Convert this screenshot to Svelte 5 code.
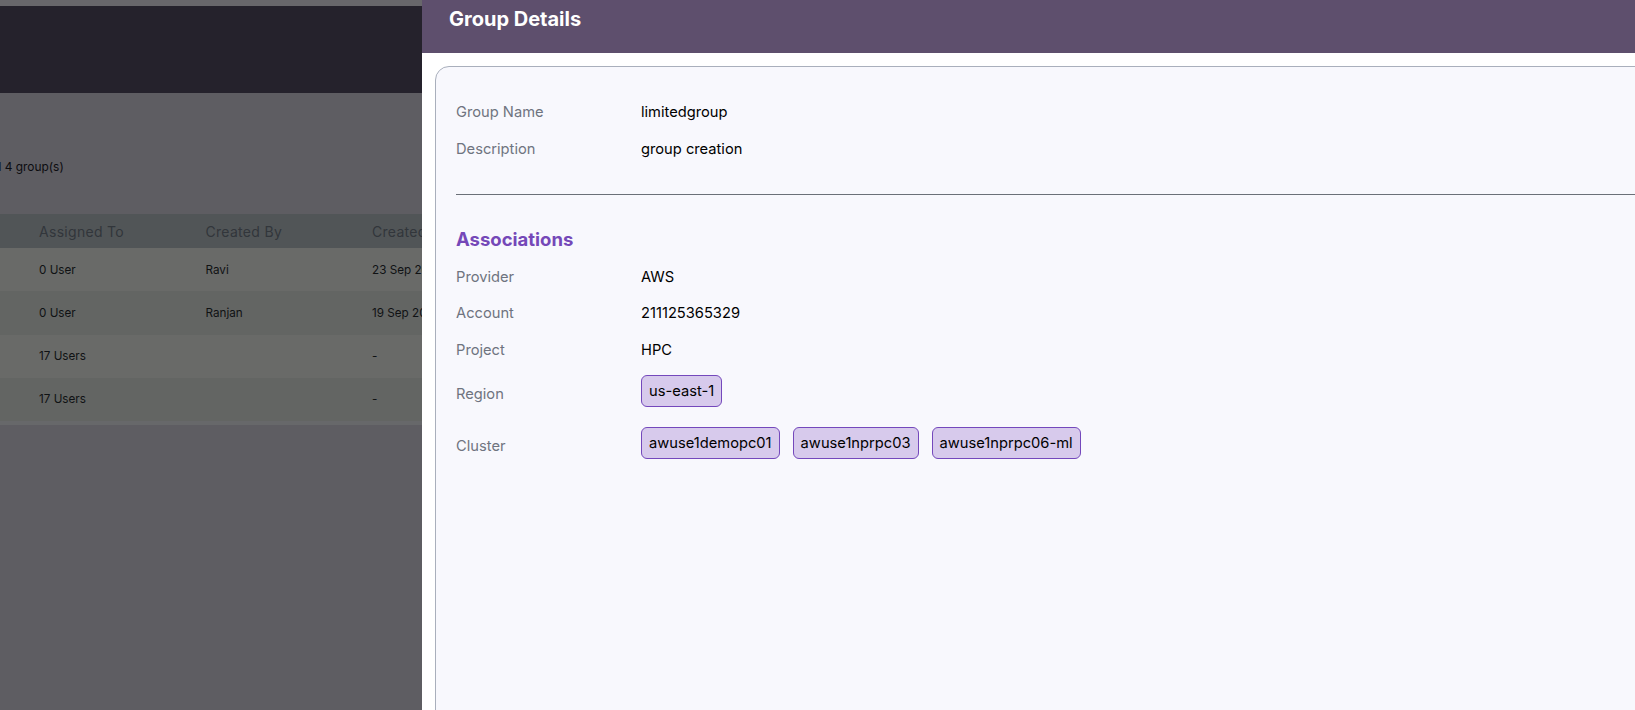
<script>
    const rows = [
        { assigned: "0 User", by: "Ravi", created: "23 Sep 2024" },
        { assigned: "0 User", by: "Ranjan", created: "19 Sep 2024" },
        { assigned: "17 Users", by: "", created: "-" },
        { assigned: "17 Users", by: "", created: "-" }
    ];

    const details = [
        { label: "Group Name", value: "limitedgroup" },
        { label: "Description", value: "group creation" }
    ];

    const associations = [
        { label: "Provider", value: "AWS" },
        { label: "Account", value: "211125365329" },
        { label: "Project", value: "HPC" }
    ];

    const regions = ["us-east-1"];
    const clusters = ["awuse1demopc01", "awuse1nprpc03", "awuse1nprpc06-ml"];
</script>

<style>
    :global(body) {
        margin: 0;
        overflow: hidden;
        font-family: Inter, "Liberation Sans", sans-serif;
    }

    .page {
        display: flex;
        height: 710px;
        overflow: hidden;
    }

    .backdrop {
        width: 422px;
        flex-shrink: 0;
        overflow: hidden;
        background: #5e5d62;
    }

    .strip {
        height: 6px;
        background: #68676b;
    }

    .topbar {
        height: 87px;
        background: #25222c;
    }

    .count {
        margin: 66px 0 0 -26px;
        height: 16px;
        font-size: 11.9px;
        line-height: 16px;
        color: #0c0c10;
        white-space: nowrap;
    }

    .table {
        margin-top: 39px;
        width: 560px;
        padding-bottom: 4px;
        background: #67686a;
    }

    .tr {
        display: grid;
        grid-template-columns: 166.5px 166.5px 1fr;
        padding-left: 39px;
        height: 43.25px;
        align-items: center;
        font-size: 11.7px;
        color: #101214;
        background: #696a68;
        white-space: nowrap;
    }

    .tr.alt {
        background: #636563;
    }

    .tr.head {
        height: 34px;
        font-size: 14px;
        letter-spacing: 0.3px;
        color: #32363b;
        background: #515557;
    }

    .panel {
        flex: 1;
        min-width: 0;
        background: #fff;
    }

    .header {
        height: 53px;
        padding-left: 27px;
        background: #5e4f6d;
    }

    h1 {
        margin: 0;
        font-size: 20px;
        line-height: 38px;
        font-weight: 700;
        color: #fff;
    }

    .body {
        padding: 13px 0 0 13px;
    }

    .card {
        height: 800px;
        margin-right: -20px;
        padding: 35px 0 0 20px;
        background: #f8f8fd;
        border: 1px solid #a9afbc;
        border-radius: 14px;
        font-size: 14.7px;
    }

    .row {
        display: flex;
        line-height: 20px;
        margin-bottom: 16.5px;
    }

    .label {
        width: 185px;
        flex-shrink: 0;
        color: #6f7480;
    }

    .value {
        color: #000;
    }

    hr {
        height: 1px;
        margin: 35px 0 0 0;
        border: 0;
        background: #6b7078;
    }

    h2 {
        margin: 32px 0 16px;
        font-size: 18.5px;
        line-height: 24px;
        font-weight: 700;
        color: #7548b8;
    }

    .chips {
        display: flex;
        gap: 13px;
    }

    .chip {
        height: 32px;
        box-sizing: border-box;
        padding: 0 7px;
        line-height: 30px;
        color: #000;
        background: #d7caec;
        border: 1px solid #7448bc;
        border-radius: 6px;
    }

    .chip-row {
        display: flex;
        margin-bottom: 20px;
    }

    .row + .chip-row {
        margin-top: -1px;
    }

    .chip-row .label {
        padding-top: 9px;
        line-height: 20px;
    }
</style>

<div class="page">
    <div class="backdrop">
        <div class="strip"></div>
        <div class="topbar"></div>
        <div class="count">Total 4 group(s)</div>
        <div class="table">
            <div class="tr head">
                <span>Assigned To</span>
                <span>Created By</span>
                <span>Created On</span>
            </div>
            {#each rows as row, i}
                <div class="tr" class:alt={i % 2 === 1}>
                    <span>{row.assigned}</span>
                    <span>{row.by}</span>
                    <span>{row.created}</span>
                </div>
            {/each}
        </div>
    </div>

    <div class="panel">
        <div class="header">
            <h1>Group Details</h1>
        </div>
        <div class="body">
            <div class="card">
                {#each details as item}
                    <div class="row">
                        <span class="label">{item.label}</span>
                        <span class="value">{item.value}</span>
                    </div>
                {/each}
                <hr />
                <h2>Associations</h2>
                {#each associations as item}
                    <div class="row">
                        <span class="label">{item.label}</span>
                        <span class="value">{item.value}</span>
                    </div>
                {/each}
                <div class="chip-row">
                    <span class="label">Region</span>
                    <div class="chips">
                        {#each regions as region}
                            <span class="chip">{region}</span>
                        {/each}
                    </div>
                </div>
                <div class="chip-row">
                    <span class="label">Cluster</span>
                    <div class="chips">
                        {#each clusters as cluster}
                            <span class="chip">{cluster}</span>
                        {/each}
                    </div>
                </div>
            </div>
        </div>
    </div>
</div>
